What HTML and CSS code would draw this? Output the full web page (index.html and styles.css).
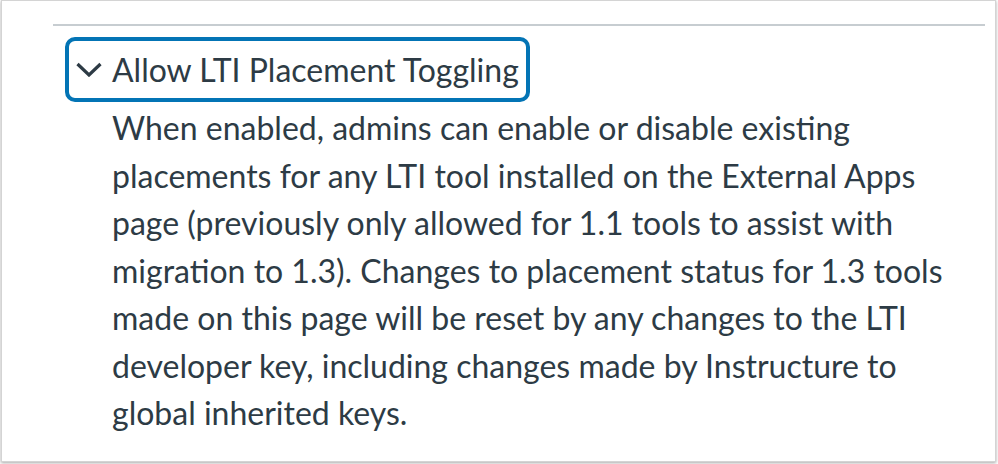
FILE: index.html
```html
<!DOCTYPE html>
<html lang="en">
<head>
  <meta charset="UTF-8">
  <title>Allow LTI Placement Toggling</title>
  <link rel="stylesheet" href="styles.css">
</head>
<body>
  <div class="frame">
    <div class="flag">
      <button class="toggle" type="button" aria-expanded="true">
        <svg class="chevron" width="26" height="15" viewBox="0 0 26 15" aria-hidden="true">
          <polyline points="1.5,2 13,13 24.5,2" fill="none" stroke="currentColor" stroke-width="3.2" />
        </svg>
        <span class="toggle-label">Allow LTI Placement Toggling</span>
      </button>
      <p class="details">
        When enabled, admins can enable or disable existing placements for any LTI tool installed on the External Apps page (previously only allowed for 1.1 tools to assist with migration to 1.3). Changes to placement status for 1.3 tools made on this page will be reset by any changes to the LTI developer key, including changes made by Instructure to global inherited keys.
      </p>
    </div>
  </div>
</body>
</html>
```

FILE: styles.css
```css
* {
  box-sizing: border-box;
  margin: 0;
  padding: 0;
}

body {
  background: #ffffff;
  font-family: 'Lato', 'Open Sans', sans-serif;
  color: #2d3b45;
}

.frame {
  height: 462px;
  margin: 0 2px 2px 1px;
  padding: 0 10px 0 51px;
  border: 1px solid #d4d4d4;
  box-shadow: 0 1px 3px rgba(0, 0, 0, 0.35);
  overflow: hidden;
}

.flag {
  margin-top: 23px;
  border-top: 2px solid #c7cdd1;
}

.toggle {
  display: inline-flex;
  align-items: center;
  gap: 10px;
  margin: 11px 0 0 12px;
  padding: 5px 7px 5px 7px;
  border: 4px solid #0374b5;
  border-radius: 10px;
  background: none;
  color: #2d3b45;
  font-family: inherit;
  font-size: 32px;
  line-height: 47.3px;
  cursor: pointer;
}

.chevron {
  display: block;
  flex-shrink: 0;
}

.details {
  max-width: 872px;
  margin: 2px 0 0 59px;
  font-size: 32px;
  line-height: 47.5px;
}
```
